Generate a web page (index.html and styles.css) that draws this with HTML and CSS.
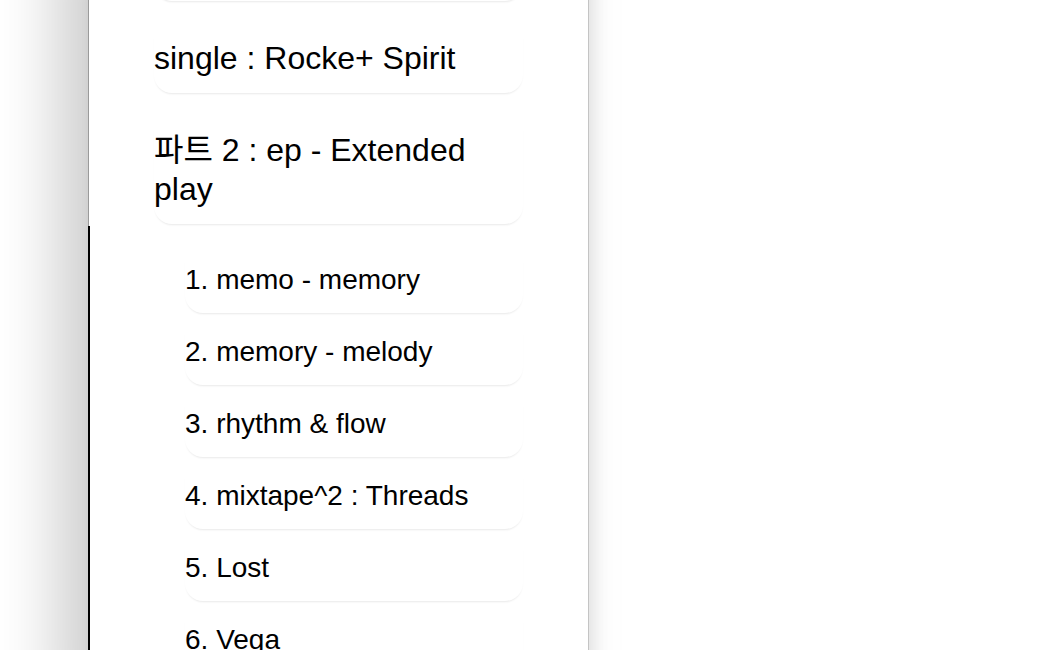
FILE: index.html
```html
<!DOCTYPE html>
<html lang="ko">
<head>
<meta charset="utf-8">
<title>Discography</title>
<link rel="stylesheet" href="styles.css">
</head>
<body>
<div class="panel">
  <div class="group-top">
    <div class="item item-hidden">album : Aurora</div>
    <div class="item">single : Rocke+ Spirit</div>
    <div class="item">파트 2 : ep - Extended play</div>
  </div>
  <div class="group-sub">
    <div class="sub-item">1. memo - memory</div>
    <div class="sub-item">2. memory - melody</div>
    <div class="sub-item">3. rhythm &amp; flow</div>
    <div class="sub-item">4. mixtape^2 : Threads</div>
    <div class="sub-item">5. Lost</div>
    <div class="sub-item">6. Vega</div>
  </div>
</div>
</body>
</html>
```

FILE: styles.css
```css
html, body {
  margin: 0;
  padding: 0;
  background: #ffffff;
}
body {
  height: 650px;
  overflow: hidden;
  font-family: "Liberation Sans", "Noto Sans CJK KR", sans-serif;
  color: #000;
}
.panel {
  box-sizing: border-box;
  width: 501px;
  margin-left: 88px;
  min-height: 650px;
  background: #fff;
  border-right: 1px solid #c4c4c4;
  box-shadow: -30px 0 60px rgba(0, 0, 0, 0.2), 6px 0 14px rgba(0, 0, 0, 0.08);
}
.group-top {
  border-left: 1px solid #9a9a9a;
  padding: 0 0 2px 65px;
}
.group-sub {
  border-left: 2px solid #000;
  padding: 19px 0 40px 95px;
}
.item,
.sub-item {
  background: #fff;
  border-radius: 18px;
  box-shadow: 0 2px 2px -1px rgba(0, 0, 0, 0.09);
}
.item {
  width: 369px;
  font-size: 32px;
  line-height: 39px;
  padding: 18px 0 15px;
  margin-top: 20px;
}
.item-hidden {
  margin-top: -71px;
}
.sub-item {
  width: 338px;
  font-size: 28px;
  line-height: 34px;
  padding: 18px 0 16px;
  margin-top: 4px;
}
.sub-item:first-child {
  margin-top: 0;
}
```
